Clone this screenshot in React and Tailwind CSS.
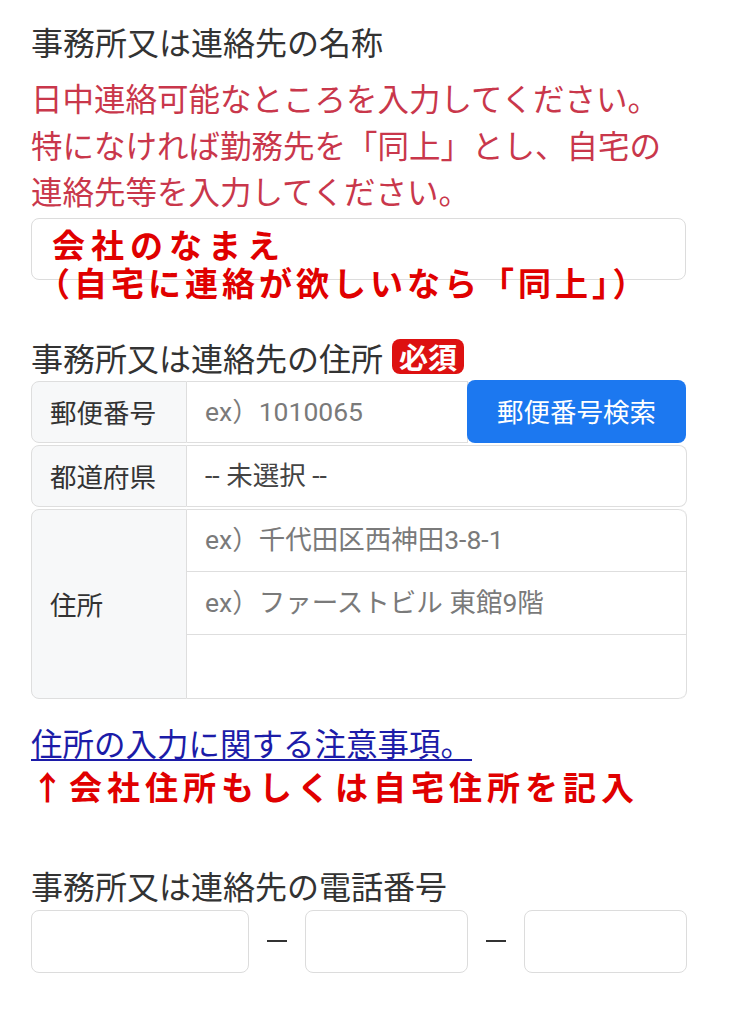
import React from "react";

const jp = { fontFamily: '"Noto Sans CJK JP", "Noto Sans", sans-serif' };
const mix = { fontFamily: 'Roboto, "Noto Sans CJK JP", sans-serif' };

export default function App() {
  return (
    <div className="w-[731px] h-[1024px] bg-white overflow-hidden text-[#333333]" style={jp}>
      <div className="pl-[31px] pr-[44px] pt-[18px]">
        {/* Section 1 */}
        <div className="text-[32px] leading-[46px] text-[#333]">事務所又は連絡先の名称</div>
        <div className="mt-[10px] text-[31.5px] leading-[46.5px] text-[#c9374b] whitespace-nowrap">
          <div>日中連絡可能なところを入力してください。</div>
          <div>特になければ勤務先を「同上」とし、自宅の</div>
          <div>連絡先等を入力してください。</div>
        </div>
        <div className="relative mt-[4px] h-[62px] w-[655px] rounded-[8px] border border-[#dcdcdc] bg-white">
          <div className="absolute left-[20px] top-[6px] text-[33px] leading-[38px] font-semibold text-[#e00000] whitespace-nowrap">
            <div className="tracking-[6px]">会社のなまえ</div>
            <div className="tracking-[4px] -ml-[15px]">（自宅に連絡が欲しいなら「同上」）</div>
          </div>
        </div>

        {/* Section 2 */}
        <div className="mt-[54px] flex items-center h-[46px]">
          <span className="text-[32px] leading-[46px]">事務所又は連絡先の住所</span>
          <span className="ml-[9px] h-[35px] w-[72px] rounded-[8px] bg-[#dd1111] text-white font-bold text-[29px] leading-[35px] flex items-center justify-center">必須</span>
        </div>

        <div className="mt-[1px] w-[656px] text-[26.5px]">
          {/* Postal */}
          <div className="flex h-[62px]">
            <div className="w-[156px] flex items-center pl-[18px] bg-[#f7f8f9] border border-[#dedede] rounded-l-[8px]">郵便番号</div>
            <div className="w-[281px] flex items-center pl-[18px] border-y border-r border-[#dedede] text-[#7a7a7a]" style={mix}>ex）1010065</div>
            <div className="w-[219px] -mt-[1px] h-[63px] flex items-center justify-center bg-[#1c78f0] text-white rounded-[8px] -ml-px">郵便番号検索</div>
          </div>
          {/* Prefecture */}
          <div className="flex h-[62px] mt-[2px]">
            <div className="w-[156px] flex items-center pl-[18px] bg-[#f7f8f9] border border-[#dedede] rounded-l-[8px]">都道府県</div>
            <div className="flex-1 flex items-center pl-[18px] border-y border-r border-[#dedede] rounded-r-[8px] text-[#444]" style={mix}>-- 未選択 --</div>
          </div>
          {/* Address */}
          <div className="flex h-[190px] mt-[2px]">
            <div className="w-[156px] flex items-center pl-[18px] bg-[#f7f8f9] border border-[#dedede] rounded-l-[8px]">住所</div>
            <div className="flex-1 flex flex-col border-r border-[#dedede] rounded-r-[8px] overflow-hidden">
              <div className="h-[63px] flex items-center pl-[18px] border-y border-[#dedede] text-[#7a7a7a] rounded-tr-[8px]" style={mix}>ex）千代田区西神田3-8-1</div>
              <div className="h-[63px] flex items-center pl-[18px] border-b border-[#dedede] text-[#7a7a7a]" style={mix}>ex）ファーストビル 東館9階</div>
              <div className="h-[64px] border-b border-[#dedede] rounded-br-[8px]"></div>
            </div>
          </div>
        </div>

        {/* Link */}
        <div className="mt-[24px] text-[31.5px] leading-[38px] whitespace-nowrap">
          <a className="text-[#1c1ca8] underline decoration-[2px] underline-offset-[3px]">住所の入力に関する注意事項。 </a>
        </div>
        <div className="mt-[5px] text-[33px] leading-[40px] font-semibold text-[#e00000] tracking-[5px] whitespace-nowrap">↑会社住所もしくは自宅住所を記入</div>

        {/* Section 3 */}
        <div className="mt-[56px] text-[32px] leading-[46px]">事務所又は連絡先の電話番号</div>
        <div className="mt-[2px] flex items-center w-[656px]">
          <div className="w-[218px] h-[63px] rounded-[8px] border border-[#dcdcdc]"></div>
          <div className="w-[56px] flex justify-center"><div className="w-[20px] h-[2px] bg-[#333]"></div></div>
          <div className="w-[163px] h-[63px] rounded-[8px] border border-[#dcdcdc]"></div>
          <div className="w-[56px] flex justify-center"><div className="w-[20px] h-[2px] bg-[#333]"></div></div>
          <div className="w-[163px] h-[63px] rounded-[8px] border border-[#dcdcdc]"></div>
        </div>
      </div>
    </div>
  );
}
